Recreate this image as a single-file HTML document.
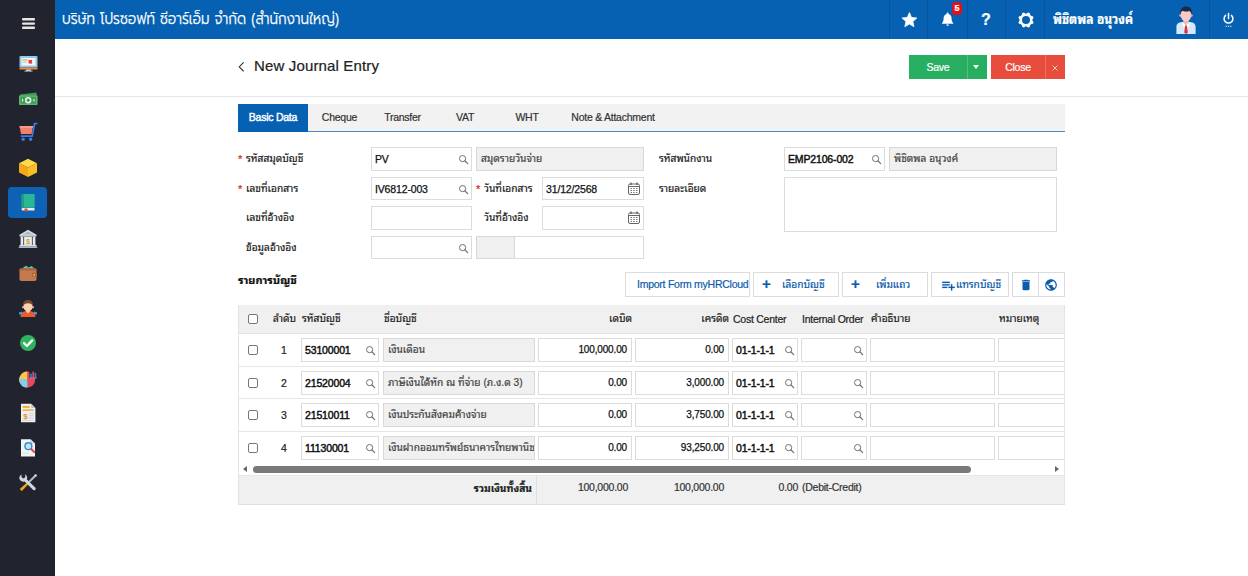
<!DOCTYPE html>
<html lang="th">
<head>
<meta charset="utf-8">
<title>New Journal Entry</title>
<style>
*{box-sizing:border-box;margin:0;padding:0}
html,body{width:1248px;height:576px;overflow:hidden;background:#fff}
body{position:relative;font-family:"Liberation Sans","Noto Sans Thai Looped","Loma","Noto Sans Thai",Tahoma,sans-serif;font-size:11px;color:#333;-webkit-text-stroke:.2px}
.abs{position:absolute}
.nw{white-space:nowrap;overflow:hidden}
/* sidebar */
#side{position:absolute;left:0;top:0;width:55px;height:576px;background:#21232e}
#side .ic{position:absolute;left:16px;width:24px;height:24px}
#side .act{position:absolute;left:8px;top:187px;width:39px;height:31px;border-radius:4px;background:#0d62b5}
/* header */
#head{position:absolute;left:55px;top:0;width:1193px;height:39px;background:#0661b3;color:#fff}
#head .sep{position:absolute;top:0;width:1px;height:39px;background:#0a529a}
#title{position:absolute;left:7px;top:0;height:39px;line-height:38px;font-size:16px;white-space:nowrap;font-family:"Prompt","Kanit","Noto Sans Thai","Liberation Sans",sans-serif;font-weight:300;transform:scaleX(.852);transform-origin:0 50%;-webkit-text-stroke:.25px #fff}
#user{position:absolute;left:998px;top:0;height:39px;line-height:40px;font-size:13.4px;font-weight:bold;white-space:nowrap;transform:scaleX(.9);transform-origin:0 50%}
/* page title */
#ptitle{position:absolute;left:254px;top:55px;font-size:15px;line-height:22px;color:#222;white-space:nowrap;letter-spacing:.15px}
#hr{position:absolute;left:55px;top:96px;width:1193px;height:1px;background:#e6e6e6}
.btn{position:absolute;top:55px;height:24px;color:#fff;font-size:10.5px;letter-spacing:-.25px;line-height:25px;text-align:center}
/* tabs */
#tabs{position:absolute;left:238px;top:104px;width:827px;height:28px;background:#f2f2f2;border-bottom:1px solid #4a8ac6}
#tabs div{position:absolute;top:0;height:27px;line-height:27px;font-size:10.5px;letter-spacing:-.25px;color:#333;text-align:center;white-space:nowrap}
#tabs .on{background:#0661b3;color:#fff;height:28px;-webkit-text-stroke:.4px}
/* form */
.lbl{position:absolute;font-size:10.2px;line-height:24px;height:24px;white-space:nowrap;color:#222}
.req{position:absolute;font-size:11px;line-height:24px;color:#e02020}
.inp{position:absolute;height:24px;border:1px solid #dcdcdc;background:#fff;font-size:10.5px;letter-spacing:-.15px;line-height:22px;padding:0 4px 0 3px;white-space:nowrap;overflow:hidden;color:#111;-webkit-text-stroke:.25px}
.bd{-webkit-text-stroke:.45px}
.ro{background:#f0f0f0;border-color:#d8d8d8;color:#444;font-size:10.2px;letter-spacing:0;padding-left:4px;-webkit-text-stroke:.2px}
.t{font-size:10.2px !important;letter-spacing:0 !important}
.mag{position:absolute;width:11px;height:11px}
.cal{position:absolute;width:12px;height:13px}
/* toolbar */
.tb{position:absolute;top:272px;height:25px;border:1px solid #dcdcdc;background:#fff;color:#0b5cab;font-size:10.5px;letter-spacing:-.25px;line-height:23px;white-space:nowrap;overflow:hidden}
/* grid */
#grid{position:absolute;left:238px;top:305px;width:827px;height:200px;overflow:hidden;border-left:1px solid #e4e4e4;border-right:1px solid #e4e4e4}
#ghead{position:absolute;left:0;top:0;width:827px;height:29px;background:#f0f0f0;border-bottom:1px solid #e2e2e2}
#ghead div{position:absolute;top:0;line-height:28px;height:28px;white-space:nowrap;color:#222;font-size:10.5px;letter-spacing:-.25px}
.row{position:absolute;left:0;width:827px;height:33px;border-bottom:1px solid #e6e6e6}
.row .inp{top:4px}
.cb{position:absolute;width:10px;height:10px;border:1px solid #767676;border-radius:2px;background:#fff}
.num{position:absolute;width:20px;text-align:center;line-height:24px;top:4px;font-size:10.5px;color:#222}
.r{text-align:right}
#gfoot{position:absolute;left:0;top:170px;width:827px;height:30px;background:#f0f0f0;border-bottom:1px solid #e0e0e0;border-top:1px solid #e6e6e6}
#gfoot div{position:absolute;top:0;line-height:26px;white-space:nowrap;color:#333;font-size:10.5px;letter-spacing:-.25px}
</style>
</head>
<body>
<!-- SIDEBAR -->
<div id="side">
<div class="act"></div>
<svg class="abs" style="left:18px;top:17px" width="20" height="20" viewBox="0 0 20 20"><rect x="4" y="1" width="13" height="2.4" rx="1" fill="#e6e6e6"/><rect x="4" y="5.4" width="13" height="2.4" rx="1" fill="#e6e6e6"/><rect x="4" y="9.6" width="13" height="2.4" rx="1" fill="#e6e6e6"/></svg>
<svg class="abs" style="left:18px;top:54px" width="20" height="20" viewBox="0 0 20 20"><rect x="1.5" y="2" width="18" height="11.5" rx="1" fill="#8ecbf0"/><rect x="3.5" y="4" width="14" height="7.5" fill="#f4f6f8"/><rect x="4.5" y="5" width="5" height="1.6" fill="#f5b942"/><rect x="4.5" y="7.5" width="4" height="1.2" fill="#9ad0ee"/><rect x="10.5" y="6" width="3.6" height="3.6" fill="#e8413c"/><rect x="1.5" y="13.5" width="18" height="2" fill="#f08a3c"/><rect x="8" y="15.5" width="5" height="1.5" fill="#cfd5da"/><rect x="6.5" y="16.6" width="8" height="1" fill="#b8c0c6"/></svg>
<svg class="abs" style="left:18px;top:90px" width="20" height="20" viewBox="0 0 20 20"><path d="M2 4.5 L18.5 2.5 L19.5 11 L3 13z" fill="#3f9b57"/><rect x="1" y="5.5" width="18.5" height="9.5" rx="0.8" fill="#5cb873"/><rect x="2.4" y="6.8" width="15.7" height="6.9" fill="#3f9b57"/><circle cx="10.2" cy="10.2" r="3.2" fill="#e9f6ec"/><circle cx="10.2" cy="10.2" r="1.6" fill="#3f9b57"/><path d="M4 8.5 L5.5 10.2 L4 12z M16.5 8.5 L15 10.2 L16.5 12z" fill="#e9f6ec"/></svg>
<svg class="abs" style="left:18px;top:122px" width="20" height="20" viewBox="0 0 20 20"><path d="M1.5 4 H15 L13.6 12 H3z" fill="#f4806b"/><path d="M1.5 4 H15 L14.6 6 H1.9z" fill="#f79a86"/><path d="M18.8 1.5 H16.6 L14.2 14.2 H3.5" fill="none" stroke="#3b7de0" stroke-width="1.7" stroke-linecap="round" stroke-linejoin="round"/><circle cx="5.2" cy="17.3" r="1.7" fill="#3b7de0"/><circle cx="12.6" cy="17.3" r="1.7" fill="#3b7de0"/></svg>
<svg class="abs" style="left:18px;top:158px" width="20" height="20" viewBox="0 0 20 20"><path d="M10 0.8 L19 5.2 L10 9.6 L1 5.2z" fill="#ffd84d"/><path d="M1 5.2 L10 9.6 V19 L1 14.4z" fill="#f6a81c"/><path d="M19 5.2 L10 9.6 V19 L19 14.4z" fill="#fbbf24"/></svg>
<svg class="abs" style="left:18px;top:193px" width="20" height="20" viewBox="0 0 20 20"><path d="M5.5 1 H15.5 a1 1 0 0 1 1 1 V14.5 H5.5 a1.8 1.8 0 0 0 0 3.6 H16.5 V18 H5.3 A2.3 2.3 0 0 1 3.5 16 V3 a2 2 0 0 1 2-2z" fill="#1f9e7e"/><rect x="5.4" y="1" width="11.1" height="13.6" fill="#2bb795"/><rect x="3.5" y="1.5" width="2.4" height="14" fill="#1f9e7e"/><path d="M5 15 H16.5 V17.6 H5 a1.3 1.3 0 0 1 0-2.6z" fill="#e8eef0"/><path d="M6.5 15.4 h3 v3.4 l-1.5-1 l-1.5 1z" fill="#e24a3b"/></svg>
<svg class="abs" style="left:18px;top:229px" width="20" height="20" viewBox="0 0 20 20"><path d="M10 0.8 L19 6 H1z" fill="#d9dfe3"/><path d="M10 2.6 L15.5 5.4 H4.5z" fill="#aeb8bf"/><rect x="1.5" y="6" width="17" height="1.6" fill="#c3ccd2"/><rect x="2.6" y="7.6" width="2.6" height="8.4" fill="#e3e8eb"/><rect x="14.8" y="7.6" width="2.6" height="8.4" fill="#e3e8eb"/><rect x="5.8" y="7.6" width="8.4" height="8.4" fill="#c3ccd2"/><rect x="6.6" y="8.2" width="6.8" height="7.4" fill="#eef1f3"/><text x="10" y="14.6" font-size="7.5" font-weight="bold" text-anchor="middle" fill="#e0a020" font-family="Liberation Sans,sans-serif">$</text><rect x="1.5" y="16" width="17" height="1.6" fill="#d9dfe3"/><rect x="0.8" y="17.4" width="18.4" height="1.6" fill="#aeb8bf"/></svg>
<svg class="abs" style="left:18px;top:264px" width="20" height="20" viewBox="0 0 20 20"><path d="M4 4.6 L8 1.8 L11 3.4 L13.5 2 L16.5 4.6z" fill="#6fc7a2"/><path d="M5.5 4.8 L9 3 L12 4.8z" fill="#4eac88"/><rect x="1.5" y="4.4" width="17" height="12.6" rx="1.8" fill="#c47a4e"/><rect x="1.5" y="4.4" width="17" height="2" rx="1" fill="#a9653d"/><rect x="14" y="8.8" width="5" height="4" rx="0.8" fill="#a9653d"/><circle cx="16.2" cy="10.8" r="0.9" fill="#f3c64e"/></svg>
<svg class="abs" style="left:18px;top:299px" width="20" height="20" viewBox="0 0 20 20"><path d="M2.5 18 C2.5 13.5 5.5 12 10 12 C14.5 12 17.5 13.5 17.5 18z" fill="#ee5a2e"/><path d="M1 13.5 L4.2 12.6 L4.2 15 L1 15.6z M19 13.5 L15.8 12.6 L15.8 15 L19 15.6z" fill="#38a9dc"/><path d="M7.6 12 L10 14.6 L12.4 12z" fill="#f6c9a3"/><ellipse cx="10" cy="7.4" rx="4.6" ry="5" fill="#f8d3b0"/><path d="M5.2 7 C4.6 2.8 7 1 10 1 C13 1 15.4 2.8 14.8 7 C14 5 12.5 4.2 10 4.2 C7.5 4.2 6 5 5.2 7z" fill="#7a4a2d"/><circle cx="5" cy="8.2" r="1" fill="#f6c9a3"/><circle cx="15" cy="8.2" r="1" fill="#f6c9a3"/></svg>
<svg class="abs" style="left:18px;top:333px" width="20" height="20" viewBox="0 0 20 20"><circle cx="10" cy="10" r="8" fill="#2fb35f"/><path d="M6 10.2 L8.9 13 L14.2 7.4" fill="none" stroke="#fff" stroke-width="2.3" stroke-linecap="round" stroke-linejoin="round"/></svg>
<svg class="abs" style="left:18px;top:369px" width="20" height="20" viewBox="0 0 20 20"><circle cx="9.2" cy="10.6" r="8" fill="#e9495d"/><path d="M9.2 10.6 V2.6 A8 8 0 0 0 1.6 13z" fill="#f7c948"/><path d="M9.2 10.6 L1.6 13 A8 8 0 0 0 9.6 18.6z" fill="#7fd0ee"/><path d="M9.2 10.6 L1.4 9.6 A8 8 0 0 0 1.6 13z" fill="#7fd0ee"/><rect x="11.4" y="1.4" width="8" height="7.6" fill="#21232e"/><rect x="12.2" y="4.6" width="1.6" height="4" fill="#3b7de0"/><rect x="14.4" y="2.6" width="1.6" height="6" fill="#e9495d"/><rect x="16.6" y="3.8" width="1.6" height="4.8" fill="#3b7de0"/><rect x="11.8" y="8.4" width="7" height="0.9" fill="#9aa3ad"/></svg>
<svg class="abs" style="left:18px;top:403px" width="20" height="20" viewBox="0 0 20 20"><path d="M3 0.8 H13.2 L17.4 5 V19.2 H3z" fill="#eceff1"/><path d="M13.2 0.8 L17.4 5 H13.2z" fill="#b9c2c8"/><rect x="4.6" y="3" width="7" height="1.8" fill="#f5a623"/><rect x="4.6" y="6.4" width="11" height="1.4" fill="#f5a623"/><text x="7.4" y="15.6" font-size="8" font-weight="bold" text-anchor="middle" fill="#f08a1c" font-family="Liberation Sans,sans-serif">$</text><rect x="10.6" y="10" width="5" height="1.1" fill="#cfd6db"/><rect x="10.6" y="12.2" width="5" height="1.1" fill="#cfd6db"/><rect x="10.6" y="14.4" width="5" height="1.1" fill="#cfd6db"/><rect x="4.6" y="16.8" width="11" height="1" fill="#cfd6db"/></svg>
<svg class="abs" style="left:18px;top:438px" width="20" height="20" viewBox="0 0 20 20"><path d="M3 1.2 H12.6 L17 5.6 V18.4 H3z" fill="#f1f3f5"/><path d="M12.6 1.2 L17 5.6 H12.6z" fill="#c9d0d6"/><circle cx="10.4" cy="8.2" r="4.1" fill="#2c8fd8"/><circle cx="10.4" cy="8.2" r="2.7" fill="#bfe3f8"/><path d="M13.2 11 L16.2 14" stroke="#e24a3b" stroke-width="2" stroke-linecap="round"/><rect x="4.6" y="14.6" width="6" height="1" fill="#d5dbe0"/></svg>
<svg class="abs" style="left:18px;top:473px" width="20" height="20" viewBox="0 0 20 20"><path d="M16.6 2 L18 3.4 L9.6 11.8 L8.2 10.4z" fill="#b8c0c8"/><path d="M18.6 1.2 L18.8 3.4 L17.4 3.6 L16.4 2.6 L16.6 1.4z" fill="#dfe4e8"/><path d="M8.6 10 L10 11.4 L4.4 17.6 A1.6 1.6 0 0 1 2.2 15.6z" fill="#f5a31a"/><path d="M3.4 1.4 A4 4 0 0 0 2.4 7.6 A4 4 0 0 0 6.6 8.4 L15 16.8 A1.5 1.5 0 0 0 17.2 14.6 L8.8 6.2 A4 4 0 0 0 7 1.2 L7.4 4 L5.6 5.4 L3.6 4.2z" fill="#cfd6dc"/></svg>
</div>
<!-- HEADER -->
<div id="head">
<div id="title">บริษัท โปรซอฟท์ ซีอาร์เอ็ม จำกัด (สำนักงานใหญ่)</div>
<div class="sep" style="left:834px"></div>
<div class="sep" style="left:872px"></div>
<div class="sep" style="left:912px"></div>
<div class="sep" style="left:950px"></div>
<div class="sep" style="left:989px"></div>
<div class="sep" style="left:1154px"></div>
<svg class="abs" style="left:845px;top:10px" width="20" height="20" viewBox="0 0 20 20"><polygon points="9.40,2.60 11.52,7.49 16.82,7.99 12.82,11.51 13.98,16.71 9.40,14.00 4.82,16.71 5.98,11.51 1.98,7.99 7.28,7.49" fill="#fff" stroke="#fff" stroke-width="0.8" stroke-linejoin="round"/></svg>
<svg class="abs" style="left:885px;top:11px" width="16" height="17" viewBox="0 0 16 17"><path d="M7.6 1.6 a1 1 0 0 1 1 1 v0.5 C10.8 3.7 11.6 5.6 11.6 7.6 C11.6 10 12.2 11 13.2 12 V12.8 H2 V12 C3 11 3.6 10 3.6 7.6 C3.6 5.6 4.4 3.7 6.6 3.1 V2.6 a1 1 0 0 1 1-1z" fill="#fff"/><path d="M6.3 13.6 h2.6 a1.3 1.3 0 0 1 -2.6 0z" fill="#fff"/></svg>
<div class="abs" style="left:897px;top:1.5px;width:10px;height:13px;border-radius:3.5px;background:#e0121c;color:#fff;font-size:9px;font-weight:bold;line-height:13px;text-align:center">5</div>
<div class="abs" style="left:921px;top:10px;width:20px;height:20px;line-height:20px;text-align:center;font-size:16px;font-weight:bold;color:#fff">?</div>
<svg class="abs" style="left:960.5px;top:9.6px" width="20" height="20" viewBox="0 0 20 20"><circle cx="10" cy="10" r="5.3" fill="none" stroke="#fff" stroke-width="2.6"/><circle cx="15.82" cy="12.41" r="1.6" fill="#fff"/><circle cx="12.41" cy="15.82" r="1.6" fill="#fff"/><circle cx="7.59" cy="15.82" r="1.6" fill="#fff"/><circle cx="4.18" cy="12.41" r="1.6" fill="#fff"/><circle cx="4.18" cy="7.59" r="1.6" fill="#fff"/><circle cx="7.59" cy="4.18" r="1.6" fill="#fff"/><circle cx="12.41" cy="4.18" r="1.6" fill="#fff"/><circle cx="15.82" cy="7.59" r="1.6" fill="#fff"/></svg>
<svg class="abs" style="left:1119px;top:5px" width="24" height="30" viewBox="0 0 24 30"><path d="M2.4 29 V22 C2.4 18.6 5 17.4 8 17 L12 16.4 L16 17 C19 17.4 21.6 18.6 21.6 22 V29z" fill="#d6e9f8"/><path d="M9.4 15 h5.2 v3 L12 20.4 L9.4 18z" fill="#f4b8ae"/><path d="M8 17 L12 20.6 L9.6 22.4z M16 17 L12 20.6 L14.4 22.4z" fill="#fff"/><path d="M11.2 20.4 h1.6 l1 7 L12 29 L10.2 27.4z" fill="#d8343c"/><ellipse cx="12" cy="10" rx="5.4" ry="6.4" fill="#f9cbc2"/><circle cx="6.5" cy="10.6" r="1.2" fill="#f4b8ae"/><circle cx="17.5" cy="10.6" r="1.2" fill="#f4b8ae"/><path d="M6.4 9.6 C5.6 4 8.4 1.6 12.4 1.6 C16.4 1.6 18.6 4.4 17.6 9.6 C17 7.6 16.4 6.6 15.6 6 C13.6 6.8 9.6 6.6 8 5.8 C7 6.8 6.6 8 6.4 9.6z" fill="#1b2a4a"/></svg>
<svg class="abs" style="left:1166px;top:12px" width="15" height="16" viewBox="0 0 15 16"><path d="M4.6 3.4 A4.4 4.4 0 1 0 10.4 3.4" fill="none" stroke="#fff" stroke-width="1.5" stroke-linecap="round"/><path d="M7.5 1.6 V6.6" stroke="#fff" stroke-width="1.5" stroke-linecap="round"/><path d="M4.6 14.3h1.2M6.9 14.3h1.2M9.2 14.3h1.2" stroke="#fff" stroke-width="1.1"/></svg>
<div id="user">พิชิตพล อนุวงค์</div>
</div>
<!-- PAGE TITLE -->
<div id="ptitle">New Journal Entry</div>
<svg class="abs" style="left:237px;top:61px" width="9" height="12" viewBox="0 0 9 12"><path d="M6.4 1.6 L2.2 5.8 L6.4 10" fill="none" stroke="#333" stroke-width="1.1" stroke-linecap="round" stroke-linejoin="round"/></svg>
<div class="abs" style="left:973px;top:65px;width:0;height:0;border-left:3.5px solid transparent;border-right:3.5px solid transparent;border-top:4px solid #fff;z-index:3"></div>
<svg class="abs" style="left:1051px;top:63.5px;z-index:3" width="8" height="8" viewBox="0 0 8 8"><path d="M1.8 1.8 L6.2 6.2 M6.2 1.8 L1.8 6.2" stroke="#fbd5d0" stroke-width="0.9" stroke-linecap="round"/></svg>
<div class="btn" style="left:909px;width:58px;background:#27ae60">Save</div>
<div class="btn" style="left:967px;width:20px;background:#27ae60;border-left:1px solid #52be80"></div>
<div class="btn" style="left:991px;width:54px;background:#e74c3c">Close</div>
<div class="btn" style="left:1045px;width:20px;background:#e74c3c;border-left:1px solid #ec7063"></div>
<div id="hr"></div>
<!-- TABS -->
<div id="tabs">
<div class="on" style="left:0;width:70px">Basic Data</div>
<div style="left:70px;width:63px">Cheque</div>
<div style="left:133px;width:63px">Transfer</div>
<div style="left:196px;width:62px">VAT</div>
<div style="left:258px;width:62px">WHT</div>
<div style="left:320px;width:110px">Note &amp; Attachment</div>
</div>
<!-- FORM -->
<div class="req" style="left:238px;top:147px">*</div>
<div class="lbl" style="left:246px;top:147px">รหัสสมุดบัญชี</div>
<div class="inp " style="left:371px;top:147px;width:101px">PV</div>
<svg class="mag" style="left:458px;top:154px" viewBox="0 0 11 11"><circle cx="4.6" cy="4.6" r="3.1" fill="none" stroke="#707070" stroke-width="1"/><path d="M7 7 L9.7 9.7" stroke="#707070" stroke-width="1.2" stroke-linecap="round"/></svg>
<div class="inp ro" style="left:476px;top:147px;width:168px">สมุดรายวันจ่าย</div>
<div class="lbl" style="left:659px;top:147px">รหัสพนักงาน</div>
<div class="inp bd" style="left:784px;top:147px;width:101px">EMP2106-002</div>
<svg class="mag" style="left:871px;top:154px" viewBox="0 0 11 11"><circle cx="4.6" cy="4.6" r="3.1" fill="none" stroke="#707070" stroke-width="1"/><path d="M7 7 L9.7 9.7" stroke="#707070" stroke-width="1.2" stroke-linecap="round"/></svg>
<div class="inp ro" style="left:889px;top:147px;width:168px">พิชิตพล อนุวงค์</div>
<div class="req" style="left:238px;top:177px">*</div>
<div class="lbl" style="left:246px;top:177px">เลขที่เอกสาร</div>
<div class="inp " style="left:371px;top:177px;width:101px;height:23px">IV6812-003</div>
<svg class="mag" style="left:458px;top:184px" viewBox="0 0 11 11"><circle cx="4.6" cy="4.6" r="3.1" fill="none" stroke="#707070" stroke-width="1"/><path d="M7 7 L9.7 9.7" stroke="#707070" stroke-width="1.2" stroke-linecap="round"/></svg>
<div class="req" style="left:476px;top:177px">*</div>
<div class="lbl" style="left:484px;top:177px">วันที่เอกสาร</div>
<div class="inp " style="left:542px;top:177px;width:102px;height:23px">31/12/2568</div>
<svg class="cal" style="left:628px;top:182px" viewBox="0 0 12 13"><rect x="0.5" y="2" width="11" height="10.5" rx="1.5" fill="#fff" stroke="#666" stroke-width="1"/><path d="M0.5 4.5h11" stroke="#666" stroke-width="1"/><path d="M3 0.5v2.5M9 0.5v2.5" stroke="#555" stroke-width="1.2"/><path d="M2.5 6.5h1.5M5.2 6.5h1.5M8 6.5h1.5M2.5 8.5h1.5M5.2 8.5h1.5M8 8.5h1.5M2.5 10.5h1.5M5.2 10.5h1.5M8 10.5h1.5" stroke="#777" stroke-width="1"/></svg>
<div class="lbl" style="left:659px;top:177px">รายละเอียด</div>
<div class="inp " style="left:784px;top:177px;width:273px;height:55px"></div>
<div class="lbl" style="left:246px;top:206px">เลขที่อ้างอิง</div>
<div class="inp " style="left:371px;top:206px;width:101px"></div>
<div class="lbl" style="left:484px;top:206px">วันที่อ้างอิง</div>
<div class="inp " style="left:542px;top:206px;width:102px"></div>
<svg class="cal" style="left:628px;top:211px" viewBox="0 0 12 13"><rect x="0.5" y="2" width="11" height="10.5" rx="1.5" fill="#fff" stroke="#666" stroke-width="1"/><path d="M0.5 4.5h11" stroke="#666" stroke-width="1"/><path d="M3 0.5v2.5M9 0.5v2.5" stroke="#555" stroke-width="1.2"/><path d="M2.5 6.5h1.5M5.2 6.5h1.5M8 6.5h1.5M2.5 8.5h1.5M5.2 8.5h1.5M8 8.5h1.5M2.5 10.5h1.5M5.2 10.5h1.5M8 10.5h1.5" stroke="#777" stroke-width="1"/></svg>
<div class="lbl" style="left:246px;top:236px">ข้อมูลอ้างอิง</div>
<div class="inp " style="left:371px;top:236px;width:101px;height:23px"></div>
<svg class="mag" style="left:458px;top:243px" viewBox="0 0 11 11"><circle cx="4.6" cy="4.6" r="3.1" fill="none" stroke="#707070" stroke-width="1"/><path d="M7 7 L9.7 9.7" stroke="#707070" stroke-width="1.2" stroke-linecap="round"/></svg>
<div class="inp " style="left:476px;top:236px;width:168px;height:23px"></div>
<div class="inp ro" style="left:476px;top:236px;width:39px;height:23px"></div>
<!-- TOOLBAR -->
<div class="abs nw" style="left:238px;top:269px;font-size:11px;line-height:22px;font-weight:bold;color:#111">รายการบัญชี</div>
<div class="tb" style="left:625px;width:125px;padding-left:11px">Import Form myHRCloud</div>
<div class="tb" style="left:753px;width:86px"><span class="abs" style="left:8px;top:-1px;font-size:15px;font-weight:bold">+</span><span class="abs" style="left:28px;font-size:10.2px;letter-spacing:0">เลือกบัญชี</span></div>
<div class="tb" style="left:842px;width:86px"><span class="abs" style="left:8px;top:-1px;font-size:15px;font-weight:bold">+</span><span class="abs" style="left:33px;font-size:10.2px;letter-spacing:0">เพิ่มแถว</span></div>
<div class="tb" style="left:931px;width:78px"><svg class="abs" style="left:9px;top:4.500px" width="15" height="15" viewBox="0 0 24 24"><path d="M14 10H2v2h12v-2zm0-4H2v2h12V6zm4 8v-4h-2v4h-4v2h4v4h2v-4h4v-2h-4zM2 16h8v-2H2v2z" fill="#0b5cab" stroke="#0b5cab" stroke-width=".3"/></svg><span class="abs" style="left:24px;font-size:10.2px;letter-spacing:0">แทรกบัญชี</span></div>
<div class="tb" style="left:1012px;width:27px"><svg class="abs" style="left:6.300px;top:4.700px" width="14" height="14" viewBox="0 0 24 24"><path d="M6 19c0 1.1.9 2 2 2h8c1.1 0 2-.9 2-2V7H6v12zM19 4h-3.500l-1-1h-5l-1 1H5v2h14V4z" fill="#0b5cab"/></svg></div>
<div class="tb" style="left:1038px;width:27px"><svg class="abs" style="left:5.100px;top:4.800px" width="14" height="14" viewBox="0 0 24 24"><circle cx="12" cy="12" r="9" fill="#fff"/><path d="M12 2C6.480 2 2 6.480 2 12s4.480 10 10 10 10-4.480 10-10S17.520 2 12 2zm-1 17.930c-3.950-.490-7-3.850-7-7.930 0-.620.080-1.210.210-1.790L9 15v1c0 1.100.900 2 2 2v1.930zm6.900-2.540c-.260-.810-1-1.390-1.900-1.390h-1v-3c0-.550-.450-1-1-1H8v-2h2c.550 0 1-.450 1-1V7h2c1.100 0 2-.900 2-2v-.410c2.930 1.190 5 4.060 5 7.410 0 2.080-.800 3.970-2.100 5.390z" fill="#0b5cab"/></svg></div>
<!-- GRID -->
<div id="grid">
<div id="ghead">
<div class="cb" style="left:9px;top:9px;height:10px;line-height:10px"></div>
<div style="left:34px" class="t">ลำดับ</div>
<div style="left:63px" class="t">รหัสบัญชี</div>
<div style="left:145px" class="t">ชื่อบัญชี</div>
<div class="r t" style="left:300px;width:93px">เดบิต</div>
<div class="r t" style="left:397px;width:93px">เครดิต</div>
<div style="left:494px">Cost Center</div>
<div style="left:563px">Internal Order</div>
<div style="left:632px" class="t">คำอธิบาย</div>
<div style="left:760px" class="t">หมายเหตุ</div>
</div>
<div class="row" style="top:29px">
<div class="cb" style="left:9px;top:11px"></div>
<div class="num" style="left:35px">1</div>
<div class="inp bd" style="left:62px;width:78px">53100001</div><svg class="mag" style="left:126px;top:11px" viewBox="0 0 11 11"><circle cx="4.6" cy="4.6" r="3.1" fill="none" stroke="#707070" stroke-width="1"/><path d="M7 7 L9.7 9.7" stroke="#707070" stroke-width="1.2" stroke-linecap="round"/></svg>
<div class="inp ro" style="left:144px;width:152px">เงินเดือน</div>
<div class="inp r" style="left:299px;width:94px;font-size:10px">100,000.00</div>
<div class="inp r" style="left:396px;width:94px;font-size:10px">0.00</div>
<div class="inp bd" style="left:493px;width:66px">01-1-1-1</div><svg class="mag" style="left:545px;top:11px" viewBox="0 0 11 11"><circle cx="4.6" cy="4.6" r="3.1" fill="none" stroke="#707070" stroke-width="1"/><path d="M7 7 L9.7 9.7" stroke="#707070" stroke-width="1.2" stroke-linecap="round"/></svg>
<div class="inp" style="left:562px;width:66px"></div><svg class="mag" style="left:614px;top:11px" viewBox="0 0 11 11"><circle cx="4.6" cy="4.6" r="3.1" fill="none" stroke="#707070" stroke-width="1"/><path d="M7 7 L9.7 9.7" stroke="#707070" stroke-width="1.2" stroke-linecap="round"/></svg>
<div class="inp" style="left:631px;width:125px"></div>
<div class="inp" style="left:759px;width:125px"></div>
</div>
<div class="row" style="top:62px;height:32px">
<div class="cb" style="left:9px;top:11px"></div>
<div class="num" style="left:35px">2</div>
<div class="inp bd" style="left:62px;width:78px">21520004</div><svg class="mag" style="left:126px;top:11px" viewBox="0 0 11 11"><circle cx="4.6" cy="4.6" r="3.1" fill="none" stroke="#707070" stroke-width="1"/><path d="M7 7 L9.7 9.7" stroke="#707070" stroke-width="1.2" stroke-linecap="round"/></svg>
<div class="inp ro" style="left:144px;width:152px">ภาษีเงินได้หัก ณ ที่จ่าย (ภ.ง.ด 3)</div>
<div class="inp r" style="left:299px;width:94px;font-size:10px">0.00</div>
<div class="inp r" style="left:396px;width:94px;font-size:10px">3,000.00</div>
<div class="inp bd" style="left:493px;width:66px">01-1-1-1</div><svg class="mag" style="left:545px;top:11px" viewBox="0 0 11 11"><circle cx="4.6" cy="4.6" r="3.1" fill="none" stroke="#707070" stroke-width="1"/><path d="M7 7 L9.7 9.7" stroke="#707070" stroke-width="1.2" stroke-linecap="round"/></svg>
<div class="inp" style="left:562px;width:66px"></div><svg class="mag" style="left:614px;top:11px" viewBox="0 0 11 11"><circle cx="4.6" cy="4.6" r="3.1" fill="none" stroke="#707070" stroke-width="1"/><path d="M7 7 L9.7 9.7" stroke="#707070" stroke-width="1.2" stroke-linecap="round"/></svg>
<div class="inp" style="left:631px;width:125px"></div>
<div class="inp" style="left:759px;width:125px"></div>
</div>
<div class="row" style="top:94px">
<div class="cb" style="left:9px;top:11px"></div>
<div class="num" style="left:35px">3</div>
<div class="inp bd" style="left:62px;width:78px">21510011</div><svg class="mag" style="left:126px;top:11px" viewBox="0 0 11 11"><circle cx="4.6" cy="4.6" r="3.1" fill="none" stroke="#707070" stroke-width="1"/><path d="M7 7 L9.7 9.7" stroke="#707070" stroke-width="1.2" stroke-linecap="round"/></svg>
<div class="inp ro" style="left:144px;width:152px">เงินประกันสังคมค้างจ่าย</div>
<div class="inp r" style="left:299px;width:94px;font-size:10px">0.00</div>
<div class="inp r" style="left:396px;width:94px;font-size:10px">3,750.00</div>
<div class="inp bd" style="left:493px;width:66px">01-1-1-1</div><svg class="mag" style="left:545px;top:11px" viewBox="0 0 11 11"><circle cx="4.6" cy="4.6" r="3.1" fill="none" stroke="#707070" stroke-width="1"/><path d="M7 7 L9.7 9.7" stroke="#707070" stroke-width="1.2" stroke-linecap="round"/></svg>
<div class="inp" style="left:562px;width:66px"></div><svg class="mag" style="left:614px;top:11px" viewBox="0 0 11 11"><circle cx="4.6" cy="4.6" r="3.1" fill="none" stroke="#707070" stroke-width="1"/><path d="M7 7 L9.7 9.7" stroke="#707070" stroke-width="1.2" stroke-linecap="round"/></svg>
<div class="inp" style="left:631px;width:125px"></div>
<div class="inp" style="left:759px;width:125px"></div>
</div>
<div class="row" style="top:127px;height:32px;border-bottom:0">
<div class="cb" style="left:9px;top:11px"></div>
<div class="num" style="left:35px">4</div>
<div class="inp bd" style="left:62px;width:78px">11130001</div><svg class="mag" style="left:126px;top:11px" viewBox="0 0 11 11"><circle cx="4.6" cy="4.6" r="3.1" fill="none" stroke="#707070" stroke-width="1"/><path d="M7 7 L9.7 9.7" stroke="#707070" stroke-width="1.2" stroke-linecap="round"/></svg>
<div class="inp ro" style="left:144px;width:152px">เงินฝากออมทรัพย์ธนาคารไทยพานิชย์</div>
<div class="inp r" style="left:299px;width:94px;font-size:10px">0.00</div>
<div class="inp r" style="left:396px;width:94px;font-size:10px">93,250.00</div>
<div class="inp bd" style="left:493px;width:66px">01-1-1-1</div><svg class="mag" style="left:545px;top:11px" viewBox="0 0 11 11"><circle cx="4.6" cy="4.6" r="3.1" fill="none" stroke="#707070" stroke-width="1"/><path d="M7 7 L9.7 9.7" stroke="#707070" stroke-width="1.2" stroke-linecap="round"/></svg>
<div class="inp" style="left:562px;width:66px"></div><svg class="mag" style="left:614px;top:11px" viewBox="0 0 11 11"><circle cx="4.6" cy="4.6" r="3.1" fill="none" stroke="#707070" stroke-width="1"/><path d="M7 7 L9.7 9.7" stroke="#707070" stroke-width="1.2" stroke-linecap="round"/></svg>
<div class="inp" style="left:631px;width:125px"></div>
<div class="inp" style="left:759px;width:125px"></div>
</div>
<div class="abs" style="left:0;top:159px;width:827px;height:11px;background:#fff"></div>
<div class="abs" style="left:4px;top:161px;width:0;height:0;border-top:3.5px solid transparent;border-bottom:3.5px solid transparent;border-right:4px solid #666"></div>
<div class="abs" style="left:816px;top:161px;width:0;height:0;border-top:3.5px solid transparent;border-bottom:3.5px solid transparent;border-left:4px solid #666"></div>
<div class="abs" style="left:14px;top:161px;width:718px;height:7px;border-radius:4px;background:#7a7a7a"></div>
<div id="gfoot"><div class="r" style="left:150px;width:143px;font-weight:bold;color:#222;font-size:10.2px;letter-spacing:0">รวมเงินทั้งสิ้น</div><div class="abs" style="left:297px;top:0;width:1px;height:28px;background:#e0e0e0"></div><div class="r" style="left:300px;width:89px;line-height:22px">100,000.00</div><div class="r" style="left:396px;width:89px;line-height:22px">100,000.00</div><div class="r" style="left:493px;width:66px;line-height:22px">0.00</div><div style="left:563px;line-height:22px">(Debit-Credit)</div></div>
</div>
</body>
</html>
